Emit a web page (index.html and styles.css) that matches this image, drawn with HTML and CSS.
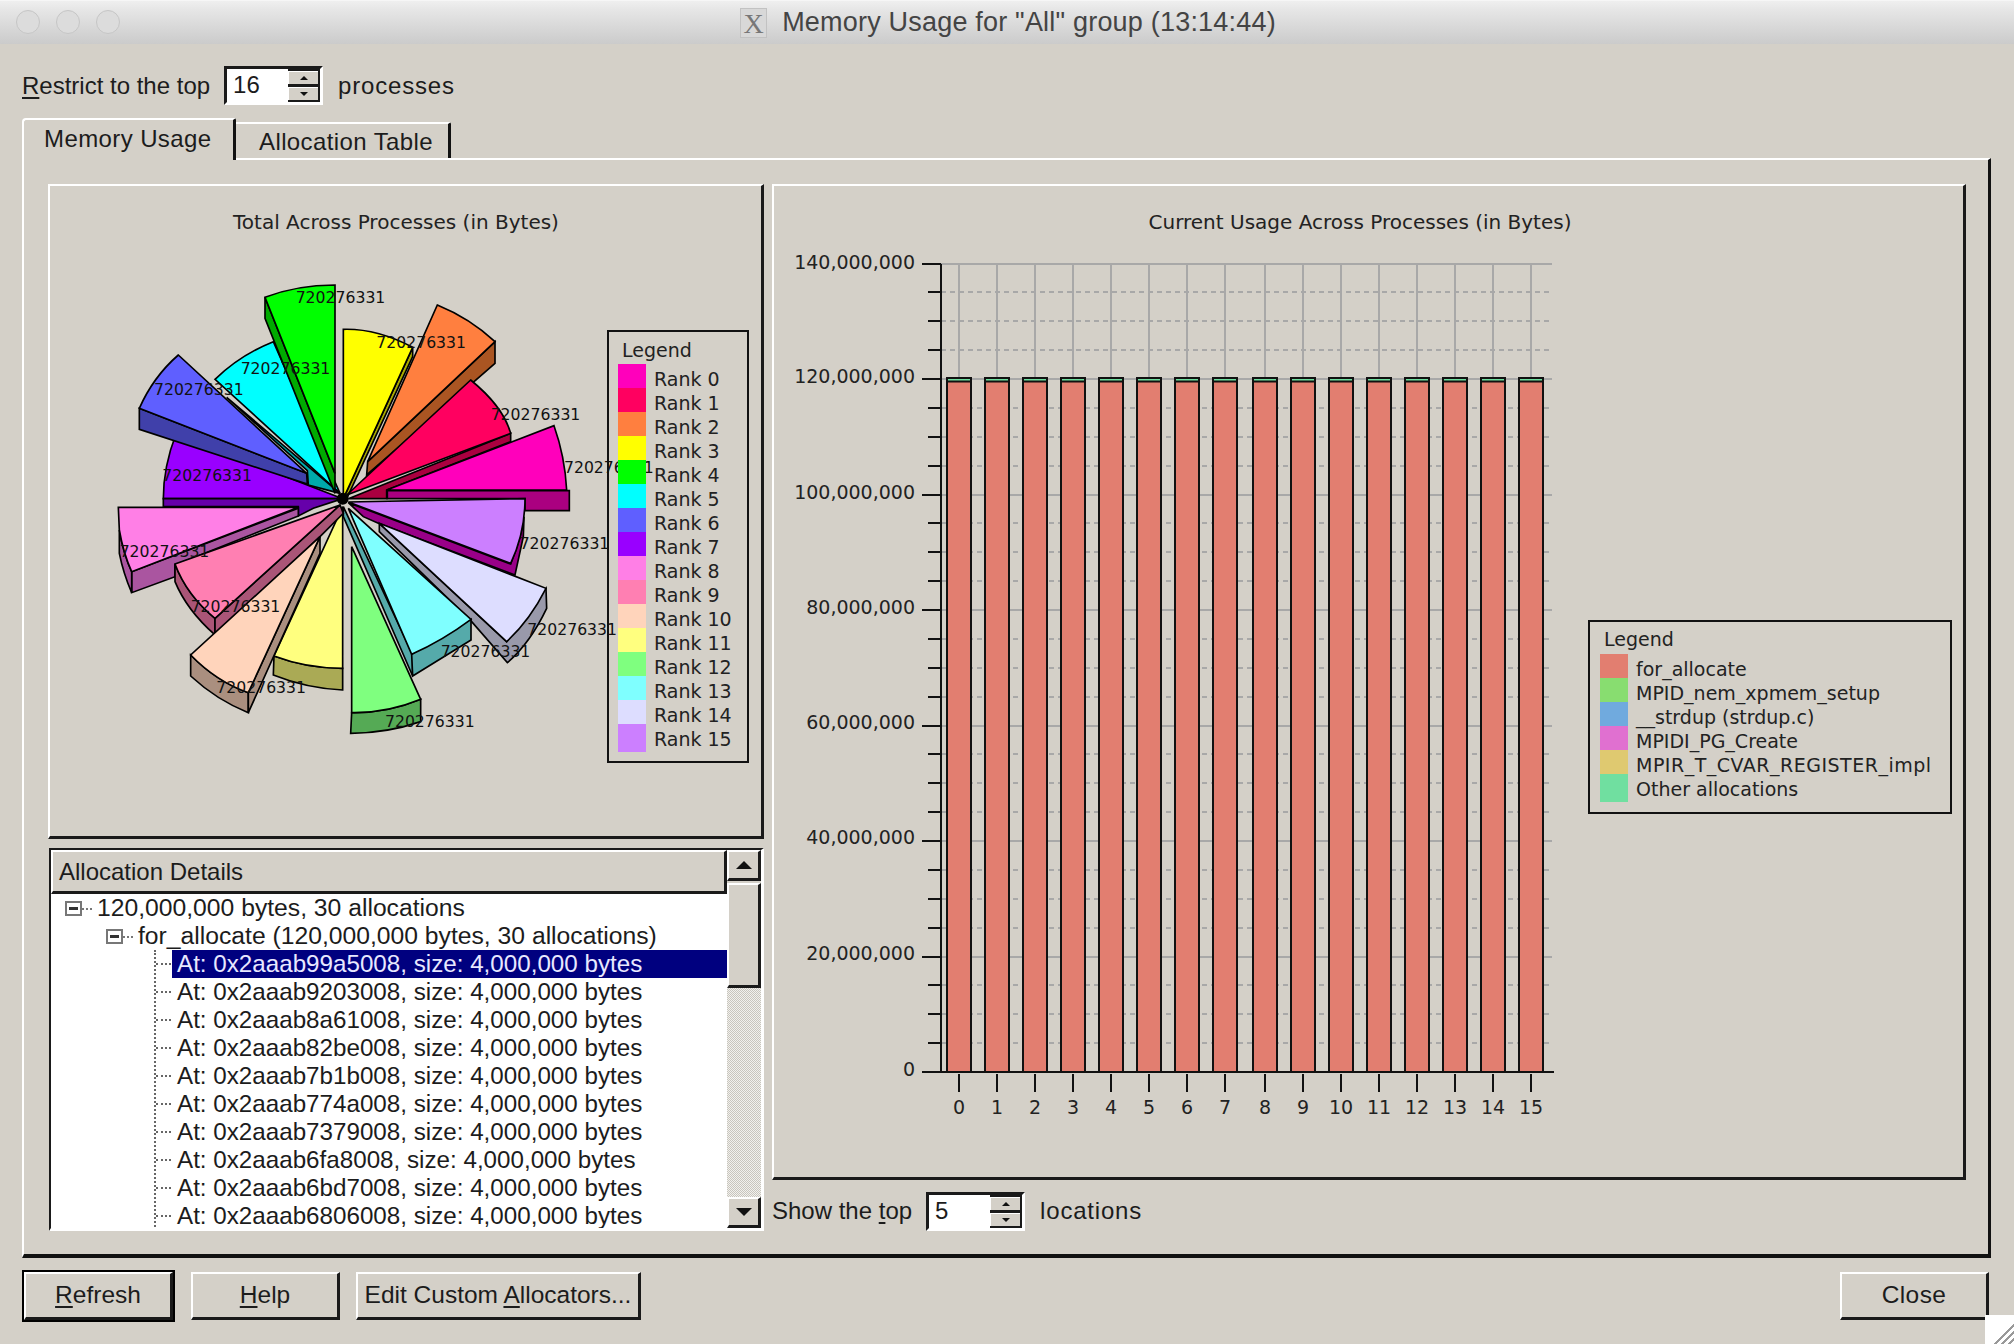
FILE: index.html
```html
<!DOCTYPE html>
<html lang="en">
<head>
    <meta charset="UTF-8">
    <title>Memory Usage for "All" group (13:14:44)</title>
    <link rel="stylesheet" href="styles.css">
</head>
<body>
<div class="window">
    <div class="titlebar">
        <div class="lights"><i></i><i></i><i></i></div>
        <span class="x-icon">X</span>
        <span class="title">Memory Usage for "All" group (13:14:44)</span>
    </div>

    <div class="restrict-row">
        <span><u>R</u>estrict to the top</span>
        <div class="spin">
            <span class="spin-value">16</span>
            <div class="spin-btns">
                <span class="spin-btn"><i class="tri-up"></i></span>
                <span class="spin-btn"><i class="tri-down"></i></span>
            </div>
        </div>
        <span class="spaced">processes</span>
    </div>

    <div class="tabs">
        <div class="tab active">Memory Usage</div>
        <div class="tab">Allocation Table</div>
    </div>

    <div class="pane">
        <div class="col-left">
            <div class="panel pie-panel">
                <svg class="chart" viewBox="50 186 711 650" width="711" height="650">
                    <text class="chart-title" x="396" y="229" text-anchor="middle">Total Across Processes (in Bytes)</text>
                    <g class="pie" transform="translate(100 260) scale(.33333)">
                        <!-- rank 7 -->
                        <path fill="#9900ff" d="M190 716Q190 620 228 522L728 716Z"/>
                        <path fill="#6600aa" d="M190 716L728 716L640 745L595 768L595 740L190 740Z"/>
                        <!-- rank 8 -->
                        <path fill="#aa55a0" d="M95 935L595 745L595 768L225 915L225 950L95 998Z"/>
                        <path fill="#aa55a0" d="M58 810Q70 880 95 935L95 998Q70 940 58 880Z"/>
                        <path fill="#ff7fe6" d="M595 742L55 742L58 810Q70 880 95 935Z"/>
                        <!-- rank 6 -->
                        <path fill="#4040aa" d="M118 445L620 640L622 672L118 508Z"/>
                        <path fill="#5f5fff" d="M620 640L118 445Q160 350 235 285Z"/>
                        <!-- rank 5 -->
                        <path fill="#00ffff" d="M720 700L345 358Q420 285 520 245Z"/>
                        <path fill="#00aaaa" d="M380 412L720 700L625 675L622 632Z"/>
                        <!-- rank 4 -->
                        <path fill="#00aa00" d="M495 112L705 640L705 700L495 175Z"/>
                        <path fill="#00ff00" d="M705 640L705 75Q590 75 495 112Z"/>
                        <!-- rank 3 -->
                        <path fill="#aaaa00" d="M938 262L938 290L740 716L730 716Z"/>
                        <path fill="#ffff00" d="M730 716L730 208Q830 205 938 262Z"/>
                        <!-- rank 2 -->
                        <path fill="#aa5522" d="M803 605L1185 245L1185 310L800 645Z"/>
                        <path fill="#ff7f3f" d="M803 605L1012 135Q1110 175 1185 245Z"/>
                        <!-- rank 1 -->
                        <path fill="#aa0040" d="M1232 520L1232 545L860 690L860 716L745 716Z"/>
                        <path fill="#ff0060" d="M740 705L1112 360Q1210 440 1232 520Z"/>
                        <!-- rank 0 -->
                        <path fill="#aa0080" d="M862 692L1408 692L1408 752L1275 752L1275 716L862 716Z"/>
                        <path fill="#ff00bb" d="M860 690L1362 497Q1395 590 1400 690Z"/>
                        <!-- rank 15 -->
                        <path fill="#990088" d="M745 728L1232 912Q1265 830 1272 770L1270 830L1245 945L835 790L790 770Z"/>
                        <path fill="#cc7fff" d="M745 726L1275 716Q1275 820 1232 910Z"/>
                        <!-- rank 14 -->
                        <path fill="#9999aa" d="M838 790L1220 1145L1338 985L1340 1045Q1290 1150 1222 1208L1115 1085L838 815Z"/>
                        <path fill="#ddddff" d="M838 790L1338 985Q1290 1080 1220 1145Z"/>
                        <!-- rank 13 -->
                        <path fill="#55aaaa" d="M730 740L938 1183L938 1248L730 770Z"/>
                        <path fill="#55aaaa" d="M935 1183L1113 1078L1113 1140L938 1248Z"/>
                        <path fill="#7fffff" d="M745 745L1113 1078Q1030 1140 935 1183Z"/>
                        <!-- rank 12 -->
                        <path fill="#55aa55" d="M755 1358Q860 1360 962 1318L962 1385Q860 1420 752 1420Z"/>
                        <path fill="#7fff7f" d="M755 860L962 1318Q860 1360 755 1358Z"/>
                        <!-- rank 11 -->
                        <path fill="#aaaa55" d="M522 1188Q620 1225 728 1225L728 1290Q620 1285 520 1245Z"/>
                        <path fill="#ffff7f" d="M728 740L728 1225Q620 1225 522 1188Z"/>
                        <!-- rank 9 -->
                        <path fill="#aa5577" d="M225 912Q260 1005 345 1075L345 1125Q260 1050 225 965Z"/>
                        <path fill="#aa5577" d="M720 735L345 1075L345 1125L660 830L730 760Z"/>
                        <path fill="#ff7fb2" d="M720 735L345 1075Q260 1005 225 912Z"/>
                        <!-- rank 10 -->
                        <path fill="#aa8f7f" d="M272 1185Q350 1265 445 1298L445 1358Q350 1320 272 1248Z"/>
                        <path fill="#aa8f7f" d="M660 830L445 1298L445 1358L660 880Z"/>
                        <path fill="#ffd4bb" d="M660 830L445 1298Q350 1265 272 1185Z"/>
                        <circle cx="728" cy="716" r="18"/>
                    </g>
                    <g class="pie-labels" transform="translate(99 260) scale(.33333)">
                        <text x="590" y="130">720276331</text>
                        <text x="832" y="263">720276331</text>
                        <text x="425" y="342">720276331</text>
                        <text x="165" y="405">720276331</text>
                        <text x="1175" y="480">720276331</text>
                        <text x="1395" y="640">720276331</text>
                        <text x="190" y="662">720276331</text>
                        <text x="1262" y="867">720276331</text>
                        <text x="62" y="890">720276331</text>
                        <text x="275" y="1055">720276331</text>
                        <text x="1285" y="1125">720276331</text>
                        <text x="1025" y="1190">720276331</text>
                        <text x="352" y="1300">720276331</text>
                        <text x="858" y="1402">720276331</text>
                    </g>
                    <rect class="legend-box" x="608" y="331" width="140" height="431"/>
                    <text class="legend-text" x="622" y="357">Legend</text>
                    <g class="swatches">
                        <rect x="618" y="364" width="28" height="24" fill="#ff00bb"/>
                        <rect x="618" y="388" width="28" height="24" fill="#ff0060"/>
                        <rect x="618" y="412" width="28" height="24" fill="#ff7f3f"/>
                        <rect x="618" y="436" width="28" height="24" fill="#ffff00"/>
                        <rect x="618" y="460" width="28" height="24" fill="#00ff00"/>
                        <rect x="618" y="484" width="28" height="24" fill="#00ffff"/>
                        <rect x="618" y="508" width="28" height="24" fill="#5f5fff"/>
                        <rect x="618" y="532" width="28" height="24" fill="#9900ff"/>
                        <rect x="618" y="556" width="28" height="24" fill="#ff7fe6"/>
                        <rect x="618" y="580" width="28" height="24" fill="#ff7fb2"/>
                        <rect x="618" y="604" width="28" height="24" fill="#ffd4bb"/>
                        <rect x="618" y="628" width="28" height="24" fill="#ffff7f"/>
                        <rect x="618" y="652" width="28" height="24" fill="#7fff7f"/>
                        <rect x="618" y="676" width="28" height="24" fill="#7fffff"/>
                        <rect x="618" y="700" width="28" height="24" fill="#ddddff"/>
                        <rect x="618" y="724" width="28" height="28" fill="#cc7fff"/>
                    </g>
                    <g class="legend-text">
                        <text x="654" y="386">Rank 0</text>
                        <text x="654" y="410">Rank 1</text>
                        <text x="654" y="434">Rank 2</text>
                        <text x="654" y="458">Rank 3</text>
                        <text x="654" y="482">Rank 4</text>
                        <text x="654" y="506">Rank 5</text>
                        <text x="654" y="530">Rank 6</text>
                        <text x="654" y="554">Rank 7</text>
                        <text x="654" y="578">Rank 8</text>
                        <text x="654" y="602">Rank 9</text>
                        <text x="654" y="626">Rank 10</text>
                        <text x="654" y="650">Rank 11</text>
                        <text x="654" y="674">Rank 12</text>
                        <text x="654" y="698">Rank 13</text>
                        <text x="654" y="722">Rank 14</text>
                        <text x="654" y="746">Rank 15</text>
                    </g>
                </svg>
            </div>

            <div class="details">
                <div class="details-main">
                    <div class="details-head">Allocation Details</div>
                    <div class="tree">
                        <div class="row row-root"><span class="expander"></span>120,000,000 bytes, 30 allocations</div>
                        <div class="row row-func"><span class="expander"></span>for_allocate (120,000,000 bytes, 30 allocations)</div>
                        <div class="leaves">
                            <div class="row leaf selected">At: 0x2aaab99a5008, size: 4,000,000 bytes</div>
                            <div class="row leaf">At: 0x2aaab9203008, size: 4,000,000 bytes</div>
                            <div class="row leaf">At: 0x2aaab8a61008, size: 4,000,000 bytes</div>
                            <div class="row leaf">At: 0x2aaab82be008, size: 4,000,000 bytes</div>
                            <div class="row leaf">At: 0x2aaab7b1b008, size: 4,000,000 bytes</div>
                            <div class="row leaf">At: 0x2aaab774a008, size: 4,000,000 bytes</div>
                            <div class="row leaf">At: 0x2aaab7379008, size: 4,000,000 bytes</div>
                            <div class="row leaf">At: 0x2aaab6fa8008, size: 4,000,000 bytes</div>
                            <div class="row leaf">At: 0x2aaab6bd7008, size: 4,000,000 bytes</div>
                            <div class="row leaf">At: 0x2aaab6806008, size: 4,000,000 bytes</div>
                        </div>
                    </div>
                </div>
                <div class="scrollbar">
                    <span class="scroll-btn"><i class="tri-up big"></i></span>
                    <span class="scroll-thumb"></span>
                    <span class="scroll-trough"></span>
                    <span class="scroll-btn"><i class="tri-down big"></i></span>
                </div>
            </div>
        </div>

        <div class="col-right">
            <div class="panel bar-panel">
                <svg class="chart" viewBox="774 186 1189 991" width="1189" height="991">
                    <defs>
                        <g id="bar">
                            <rect class="bar-body" x="-12" y="381" width="24" height="691"/>
                            <rect class="bar-cap" x="-12" y="378" width="24" height="3.5"/>
                        </g>
                    </defs>
                    <text class="chart-title" x="1360" y="229" text-anchor="middle">Current Usage Across Processes (in Bytes)</text>
                    <path class="grid-minor" d="M941 292H1552M941 321H1552M941 350H1552M941 408H1552M941 437H1552M941 466H1552M941 523H1552M941 552H1552M941 581H1552M941 639H1552M941 668H1552M941 697H1552M941 754H1552M941 783H1552M941 812H1552M941 870H1552M941 899H1552M941 928H1552M941 985H1552M941 1014H1552M941 1043H1552"/>
                    <path class="grid-major" d="M941 264H1552M941 379H1552M941 495H1552M941 610H1552M941 726H1552M941 841H1552M941 957H1552"/>
                    <path class="grid-major" d="M959 264V1072M997 264V1072M1035 264V1072M1073 264V1072M1111 264V1072M1149 264V1072M1187 264V1072M1225 264V1072M1265 264V1072M1303 264V1072M1341 264V1072M1379 264V1072M1417 264V1072M1455 264V1072M1493 264V1072M1531 264V1072"/>
                    <use href="#bar" x="959"/><use href="#bar" x="997"/><use href="#bar" x="1035"/><use href="#bar" x="1073"/>
                    <use href="#bar" x="1111"/><use href="#bar" x="1149"/><use href="#bar" x="1187"/><use href="#bar" x="1225"/>
                    <use href="#bar" x="1265"/><use href="#bar" x="1303"/><use href="#bar" x="1341"/><use href="#bar" x="1379"/>
                    <use href="#bar" x="1417"/><use href="#bar" x="1455"/><use href="#bar" x="1493"/><use href="#bar" x="1531"/>
                    <path class="axis" d="M941 264V1072M922 1072H1554M922 264H941M922 379H941M922 495H941M922 610H941M922 726H941M922 841H941M922 957H941"/>
                    <path class="axis" d="M928 292H941M928 321H941M928 350H941M928 408H941M928 437H941M928 466H941M928 523H941M928 552H941M928 581H941M928 639H941M928 668H941M928 697H941M928 754H941M928 783H941M928 812H941M928 870H941M928 899H941M928 928H941M928 985H941M928 1014H941M928 1043H941"/>
                    <path class="axis" d="M959 1074V1092M997 1074V1092M1035 1074V1092M1073 1074V1092M1111 1074V1092M1149 1074V1092M1187 1074V1092M1225 1074V1092M1265 1074V1092M1303 1074V1092M1341 1074V1092M1379 1074V1092M1417 1074V1092M1455 1074V1092M1493 1074V1092M1531 1074V1092"/>
                    <g class="axis-label" text-anchor="end">
                        <text x="915" y="269">140,000,000</text>
                        <text x="915" y="383">120,000,000</text>
                        <text x="915" y="499">100,000,000</text>
                        <text x="915" y="614">80,000,000</text>
                        <text x="915" y="729">60,000,000</text>
                        <text x="915" y="844">40,000,000</text>
                        <text x="915" y="960">20,000,000</text>
                        <text x="915" y="1076">0</text>
                    </g>
                    <g class="axis-label" text-anchor="middle">
                        <text x="959" y="1114">0</text><text x="997" y="1114">1</text><text x="1035" y="1114">2</text><text x="1073" y="1114">3</text>
                        <text x="1111" y="1114">4</text><text x="1149" y="1114">5</text><text x="1187" y="1114">6</text><text x="1225" y="1114">7</text>
                        <text x="1265" y="1114">8</text><text x="1303" y="1114">9</text><text x="1341" y="1114">10</text><text x="1379" y="1114">11</text>
                        <text x="1417" y="1114">12</text><text x="1455" y="1114">13</text><text x="1493" y="1114">14</text><text x="1531" y="1114">15</text>
                    </g>
                    <rect class="legend-box" x="1589" y="621" width="362" height="192"/>
                    <text class="legend-text" x="1604" y="646">Legend</text>
                    <g class="swatches">
                        <rect x="1600" y="654" width="28" height="24" fill="#e27e70"/>
                        <rect x="1600" y="678" width="28" height="24" fill="#88dd70"/>
                        <rect x="1600" y="702" width="28" height="24" fill="#70aade"/>
                        <rect x="1600" y="726" width="28" height="24" fill="#e070d0"/>
                        <rect x="1600" y="750" width="28" height="24" fill="#dfc970"/>
                        <rect x="1600" y="774" width="28" height="28" fill="#70dfa0"/>
                    </g>
                    <g class="legend-text">
                        <text x="1636" y="676">for_allocate</text>
                        <text x="1636" y="700">MPID_nem_xpmem_setup</text>
                        <text x="1636" y="724">__strdup (strdup.c)</text>
                        <text x="1636" y="748">MPIDI_PG_Create</text>
                        <text class="legend-wide" x="1636" y="772">MPIR_T_CVAR_REGISTER_impl</text>
                        <text x="1636" y="796">Other allocations</text>
                    </g>
                </svg>
            </div>
            <div class="show-row">
                <span>Show the <u>t</u>op</span>
                <div class="spin">
                    <span class="spin-value">5</span>
                    <div class="spin-btns">
                        <span class="spin-btn"><i class="tri-up"></i></span>
                        <span class="spin-btn"><i class="tri-down"></i></span>
                    </div>
                </div>
                <span class="spaced">locations</span>
            </div>
        </div>
    </div>

    <div class="footer">
        <div class="btn-ring"><button class="btn btn-refresh"><u>R</u>efresh</button></div>
        <button class="btn btn-help"><u>H</u>elp</button>
        <button class="btn btn-edit">Edit Custom <u>A</u>llocators...</button>
        <button class="btn btn-close">Close</button>
    </div>

    <div class="grip"></div>
</div>
</body>
</html>
```

FILE: styles.css
```css
* { box-sizing: border-box; }
html, body { margin: 0; padding: 0; overflow: hidden; }
body { background: #d4d0c8; color: #1c1c1c; font-family: "Liberation Sans", Arial, sans-serif; font-size: 24px; }
u { text-underline-offset: 3px; }

.window { position: relative; width: 2014px; height: 1344px; overflow: hidden; }

/* title bar */
.titlebar { position: relative; height: 44px; display: flex; align-items: center; justify-content: center; gap: 15px; padding-left: 2px; background: linear-gradient(#efefef, #e6e6e6 20%, #cbcbcb); border-top: 1px solid #f6f6f6; }
.lights { position: absolute; left: 16px; top: 9px; display: flex; gap: 16px; }
.lights i { width: 24px; height: 24px; border-radius: 50%; background: #dcdcdc; border: 1px solid #c6c6c6; }
.x-icon { width: 27px; height: 30px; background: #d8d8d8; border: 1px solid #c2c2c2; color: #777; font-family: "Liberation Serif", serif; font-size: 28px; line-height: 30px; text-align: center; }
.title { color: #444; font-size: 27px; letter-spacing: 0.2px; }

/* spin boxes */
.restrict-row { display: flex; align-items: center; height: 39px; margin-top: 22px; padding-left: 22px; }
.spaced { margin-left: 15px; letter-spacing: 0.8px; }
.restrict-row .spin { margin-left: 14px; }
.spin { display: flex; width: 99px; height: 39px; border: 3px solid; border-color: #1a1a1a #fff #fff #1a1a1a; background: #fff; }
.spin-value { flex: 1; padding-left: 6px; line-height: 32px; }
.spin-btns { width: 32px; display: flex; flex-direction: column; justify-content: space-between; background: #1a1a1a; padding: 2px 2px 2px 0; gap: 3px; }
.spin-btn { flex: 1; display: flex; align-items: center; justify-content: center; background: #d4d0c8; border-top: 1px solid #fff; border-left: 1px solid #fff; }
.tri-up, .tri-down { width: 0; height: 0; border-left: 4px solid transparent; border-right: 4px solid transparent; }
.tri-up { border-bottom: 4px solid #111; }
.tri-down { border-top: 4px solid #111; }
.tri-up.big { border-left-width: 8px; border-right-width: 8px; border-bottom-width: 8px; }
.tri-down.big { border-left-width: 8px; border-right-width: 8px; border-top-width: 8px; }

/* tabs */
.tabs { display: flex; align-items: flex-end; margin-top: 13px; padding-left: 22px; height: 42px; position: relative; z-index: 1; letter-spacing: 0.4px; }
.tab { width: 215px; height: 36px; margin-bottom: 2px; border-top: 2px solid #fff; border-right: 3px solid #111; line-height: 35px; padding-left: 23px; border-top-right-radius: 2px; }
.tab.active { width: 214px; height: 42px; margin-bottom: 0; padding-left: 20px; border-left: 2px solid #fff; line-height: 38px; border-top-left-radius: 4px; background: #d4d0c8; }

.pane { display: flex; gap: 8px; width: 1969px; height: 1100px; margin-left: 22px; margin-top: -2px; padding: 24px 0 0 24px; border: solid; border-width: 2px 3px 4px 2px; border-color: #fff #111 #111 #fff; }
.col-left { width: 716px; display: flex; flex-direction: column; gap: 9px; }
.col-right { width: 1194px; display: flex; flex-direction: column; }

.panel { border: solid; border-width: 2px 3px 3px 2px; border-color: #fff #1a1a1a #1a1a1a #fff; }
.pie-panel { height: 655px; }
.bar-panel { height: 996px; }
.chart { display: block; overflow: hidden; }

/* chart text and marks */
.chart-title { font-family: "DejaVu Sans", sans-serif; font-size: 20px; fill: #222; }
.legend-text { font-family: "DejaVu Sans", sans-serif; font-size: 19px; fill: #222; }
.legend-wide { letter-spacing: 0.5px; }
.legend-box { fill: none; stroke: #111; stroke-width: 2; }
.pie path { stroke: #000; stroke-width: 5; stroke-linejoin: miter; }
.pie-labels { font-family: "DejaVu Sans", sans-serif; font-size: 47px; fill: #111; }
.grid-major { fill: none; stroke: #a8a8a8; stroke-width: 2; }
.grid-minor { fill: none; stroke: #a8a8a8; stroke-width: 2; stroke-dasharray: 5 4; }
.axis { fill: none; stroke: #111; stroke-width: 2; }
.axis-label { font-family: "DejaVu Sans", sans-serif; font-size: 19px; fill: #222; }
.bar-body { fill: #e27e70; stroke: #111; stroke-width: 2; }
.bar-cap { fill: #70dfa0; stroke: #111; stroke-width: 2; }

/* allocation tree */
.details { display: flex; height: 383px; border-top: 2px solid #1a1a1a; border-left: 2px solid #1a1a1a; border-bottom: 3px solid #fff; border-right: 3px solid #fff; margin-left: 1px; }
.details-main { flex: 1; min-width: 0; display: flex; flex-direction: column; }
.details-head { height: 44px; padding-left: 6px; line-height: 40px; border: solid; border-width: 2px 3px 3px 2px; border-color: #fff #1a1a1a #1a1a1a #fff; }
.tree { flex: 1; overflow: hidden; background: #fff; }
.row { height: 28px; line-height: 28px; white-space: nowrap; display: flex; align-items: center; font-size: 24.2px; }
.row-root { padding-left: 14px; font-size: 24.7px; }
.row-func { padding-left: 55px; font-size: 24.7px; }
.expander { position: relative; width: 17px; height: 15px; margin-right: 15px; border: 2px solid #777; flex: none; }
.expander::before { content: ""; position: absolute; left: 2px; right: 2px; top: 4px; height: 3px; background: #333; }
.expander::after { content: ""; position: absolute; left: 100%; top: 5px; width: 10px; border-top: 2px dotted #777; margin-left: 2px; }
.leaves { position: relative; margin-left: 103px; }
.leaves::before { content: ""; position: absolute; left: 0; top: 0; bottom: 0; border-left: 2px dotted #666; }
.leaf { position: relative; margin-left: 18px; padding-left: 5px; }
.leaf::before { content: ""; position: absolute; left: -16px; top: 13px; width: 15px; border-top: 2px dotted #666; }
.selected { background: #00007f; color: #e8e8ff; }

.scrollbar { width: 34px; display: flex; flex-direction: column; }
.scroll-btn { height: 31px; display: flex; align-items: center; justify-content: center; border: solid; border-width: 2px 3px 3px 2px; border-color: #fff #1a1a1a #1a1a1a #fff; }
.scroll-thumb { height: 105px; margin-top: 2px; border: solid; border-width: 2px 3px 3px 2px; border-color: #fff #1a1a1a #1a1a1a #fff; }
.scroll-trough { flex: 1; background: repeating-conic-gradient(#c8c5bd 0 25%, #f2f1ee 0 50%) 0 0 / 2px 2px; }

.show-row { display: flex; align-items: center; height: 51px; padding-top: 11px; }
.show-row .spin { margin-left: 14px; }

/* bottom buttons */
.footer { display: flex; align-items: center; gap: 16px; height: 52px; margin-top: 12px; padding-left: 22px; padding-right: 25px; font-size: 24.5px; }
.btn { height: 48px; padding: 0 0 2px; background: #d4d0c8; color: inherit; font: inherit; border: solid; border-width: 2px 3px 3px 2px; border-color: #fff #1a1a1a #1a1a1a #fff; }
.btn-ring { border: 2px solid #000; height: 52px; }
.btn-refresh { width: 149px; display: block; }
.btn-help { width: 149px; }
.btn-edit { width: 285px; }
.btn-close { width: 149px; margin-left: auto; letter-spacing: 0.4px; }

.grip { position: absolute; right: 0; bottom: 0; width: 29px; height: 29px; background: #fff; }
.grip::after { content: ""; position: absolute; inset: 6px 0 0 6px; background: repeating-linear-gradient(135deg, transparent 0 3px, #999 3px 5px); clip-path: polygon(100% 0, 100% 100%, 0 100%); }
```
